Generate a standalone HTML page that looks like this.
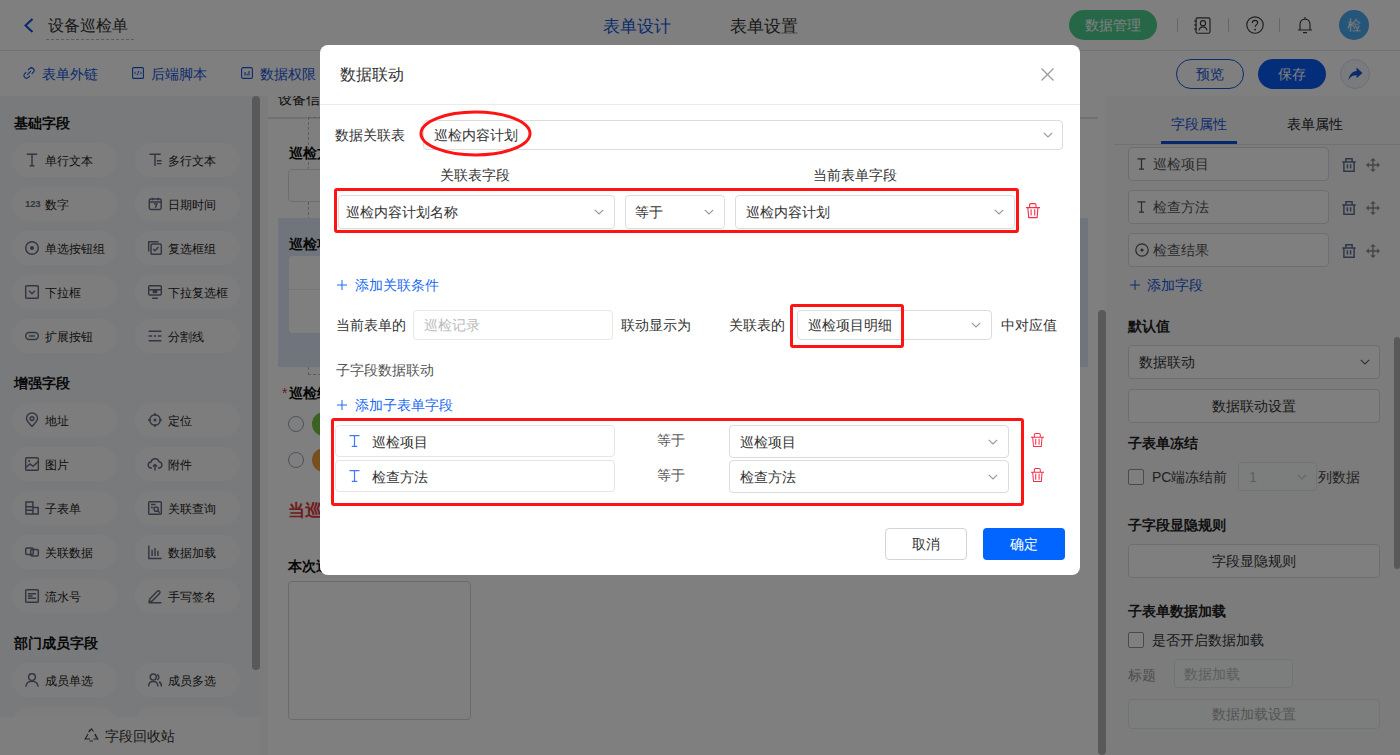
<!DOCTYPE html>
<html><head><meta charset="utf-8">
<style>
*{box-sizing:border-box}
html,body{margin:0;padding:0}
body{width:1400px;height:755px;overflow:hidden;position:relative;font-family:"Liberation Sans",sans-serif;color:#333;background:#fff}
.a{position:absolute}
.t{position:absolute;white-space:nowrap;line-height:1}
.f14{font-size:14px}.f12{font-size:12px}.f16{font-size:16px}
.b{font-weight:bold}
svg{position:absolute;overflow:visible}
/* sidebar pills */
.pill{position:absolute;width:105px;height:34px;border-radius:17px;background:#fbfbfc}
.pill .ic{position:absolute}
.pill .ic [stroke]{stroke-width:1.25}
.pill span{position:absolute;left:33px;top:12px;font-size:12px;line-height:12px;color:#222;white-space:nowrap}
.sel{position:absolute;border:1px solid #dcdfe6;border-radius:4px;background:#fff}
.chev{position:absolute;width:10px;height:6px}
</style></head><body>
<!-- ============ PAGE ============ -->
<div id="page">
 <!-- top bar -->
 <div class="a" style="left:0;top:0;width:1400px;height:51px;background:#fff;border-bottom:1px solid #e6e6e6"></div>
 <svg style="left:23px;top:18px" width="11" height="15" viewBox="0 0 11 15"><path d="M9.5 1 L2.5 7.5 L9.5 14" fill="none" stroke="#0a4fd8" stroke-width="2"/></svg>
 <div class="t f16" style="left:48px;top:18px;color:#333">设备巡检单</div>
 <div class="a" style="left:46px;top:39px;width:88px;border-top:1px dashed #bbb"></div>
 <div class="t" style="left:603px;top:17.5px;font-size:17px;color:#1656d9">表单设计</div>
 <div class="t" style="left:730px;top:17.5px;font-size:17px;color:#333">表单设置</div>
 <div class="a" style="left:1069px;top:10px;width:88px;height:30px;border-radius:15px;background:#4acf8e"></div>
 <div class="t f14" style="left:1085px;top:18px;color:#fff">数据管理</div>
 <div class="a" style="left:1177px;top:18px;width:1px;height:14px;background:#ccc"></div>
 <div class="a" style="left:1228px;top:18px;width:1px;height:14px;background:#ccc"></div>
 <div class="a" style="left:1279px;top:18px;width:1px;height:14px;background:#ccc"></div>
 <!-- contacts icon -->
 <svg style="left:1193px;top:17px" width="18" height="17" viewBox="0 0 18 17"><rect x="3" y="0.8" width="14" height="15.4" rx="1.5" fill="none" stroke="#3a3a3a" stroke-width="1.15"/><path d="M1 4h3M1 8h3M1 12h3" stroke="#3a3a3a" stroke-width="1.1"/><circle cx="10" cy="6.2" r="2.6" fill="none" stroke="#3a3a3a" stroke-width="1.1"/><path d="M6 13.5c0.5-2.5 2-3.6 4-3.6s3.5 1.1 4 3.6" fill="none" stroke="#3a3a3a" stroke-width="1.1"/></svg>
 <!-- help icon -->
 <svg style="left:1246px;top:16px" width="18" height="18" viewBox="0 0 18 18"><circle cx="9" cy="9" r="8.2" fill="none" stroke="#3a3a3a" stroke-width="1.15"/><path d="M6.3 7c0-1.7 1.2-2.7 2.7-2.7s2.7 1 2.7 2.5c0 1.8-2.5 2-2.5 4" fill="none" stroke="#3a3a3a" stroke-width="1.15"/><circle cx="9.1" cy="13.6" r="0.9" fill="#333"/></svg>
 <!-- bell icon -->
 <svg style="left:1297px;top:16px" width="16" height="18" viewBox="0 0 16 18"><path d="M8 1v1.5M3 14V8.5C3 5.5 5 3.2 8 3.2s5 2.3 5 5.3V14M1 14h14M6 16.6h4" fill="none" stroke="#3a3a3a" stroke-width="1.15"/></svg>
 <div class="a" style="left:1339px;top:10px;width:30px;height:30px;border-radius:15px;background:#4aaaf0"></div>
 <div class="t f14" style="left:1347px;top:18px;color:#f4f8fc">检</div>

 <!-- second bar -->
 <div class="a" style="left:0;top:51px;width:1400px;height:45px;background:#fff"></div>
 <svg style="left:23px;top:67px" width="12" height="12" viewBox="0 0 12 12"><path d="M5 3.2l1.6-1.6a2.6 2.6 0 0 1 3.7 3.7L8.7 6.9M7 8.8L5.4 10.4a2.6 2.6 0 0 1-3.7-3.7L3.3 5.1M4.2 7.8l3.6-3.6" fill="none" stroke="#1656d9" stroke-width="1.1"/></svg>
 <div class="t f14" style="left:42px;top:67px;color:#1656d9">表单外链</div>
 <svg style="left:132px;top:67px" width="12" height="12" viewBox="0 0 12 12"><rect x="0.6" y="0.6" width="10.8" height="10.8" rx="1" fill="none" stroke="#1656d9" stroke-width="1.1"/><path d="M4 4.5L2.5 6 4 7.5M8 4.5L9.5 6 8 7.5M6.6 3.8L5.4 8.2" fill="none" stroke="#1656d9" stroke-width="0.9"/></svg>
 <div class="t f14" style="left:151px;top:67px;color:#1656d9">后端脚本</div>
 <svg style="left:241px;top:67px" width="12" height="12" viewBox="0 0 12 12"><rect x="0.6" y="0.6" width="10.8" height="10.8" rx="1.5" fill="none" stroke="#1656d9" stroke-width="1.1"/><path d="M4 5v3.5M6 6.5v2M8 4v4.5" stroke="#1656d9" stroke-width="1.1"/></svg>
 <div class="t f14" style="left:260px;top:67px;color:#1656d9">数据权限</div>
 <div class="a" style="left:1176px;top:59px;width:68px;height:30px;border-radius:15px;border:1px solid #1656d9;background:#fff"></div>
 <div class="t f14" style="left:1196px;top:67px;color:#1656d9">预览</div>
 <div class="a" style="left:1258px;top:59px;width:68px;height:30px;border-radius:15px;background:#0a5cf5"></div>
 <div class="t f14" style="left:1278px;top:67px;color:#fff">保存</div>
 <div class="a" style="left:1340px;top:59px;width:30px;height:30px;border-radius:15px;border:1px solid #d5def0;background:#f3f6fb"></div>
 <svg style="left:1348px;top:67px" width="15" height="14" viewBox="0 0 14 13"><path d="M8 0.5L13.5 5.5 8 10.5V7.6C4.5 7.6 2.3 8.8 0.5 12 1 7.5 3.5 4.2 8 3.6Z" fill="#1656d9"/></svg>

 <!-- left sidebar -->
 <div class="a" style="left:0;top:96px;width:260px;height:659px;background:#f3f4f6"></div>
 <div class="t f14 b" style="left:14px;top:116px;color:#111">基础字段</div>
 <div class="t f14 b" style="left:14px;top:376px;color:#111">增强字段</div>
 <div class="t f14 b" style="left:14px;top:636px;color:#111">部门成员字段</div>
 <div id="pills"><div class="pill" style="left:12px;top:143px"><svg class="ic" style="left:13px;top:10px" width="14" height="14" viewBox="0 0 12 12"><path d="M1.5 1h9M6 1v10M4 11h4" stroke="#646d82" stroke-width="1.3" fill="none"/></svg><span>单行文本</span></div>
 <div class="pill" style="left:135px;top:143px"><svg class="ic" style="left:13px;top:10px" width="14" height="14" viewBox="0 0 12 12"><path d="M1.3 1.1h9.6M6 1.1v10M7.6 6.7h4M7.6 9.1h4" stroke="#646d82" stroke-width="1.2" fill="none"/></svg><span>多行文本</span></div>
 <div class="pill" style="left:12px;top:187px"><svg class="ic" style="left:13px;top:10px" width="14" height="14" viewBox="0 0 12 12"><text x="0" y="8.7" font-size="8.3" font-weight="bold" fill="#646d82" font-family="Liberation Sans" letter-spacing="-0.2">123</text></svg><span>数字</span></div>
 <div class="pill" style="left:135px;top:187px"><svg class="ic" style="left:13px;top:10px" width="14" height="14" viewBox="0 0 12 12"><rect x="1.1" y="1.8" width="10.2" height="8.9" rx="1.2" fill="none" stroke="#646d82" stroke-width="1.2"/><path d="M1.1 4.3h10.2M3.8 0.6v2.2M8.6 0.6v2.2M5 5.9h2.6l-1.3 3.3" stroke="#646d82" stroke-width="1" fill="none"/></svg><span>日期时间</span></div>
 <div class="pill" style="left:12px;top:231px"><svg class="ic" style="left:13px;top:10px" width="14" height="14" viewBox="0 0 12 12"><circle cx="6" cy="6" r="5.4" fill="none" stroke="#646d82" stroke-width="1.2"/><circle cx="6" cy="6" r="1.8" fill="#646d82"/></svg><span>单选按钮组</span></div>
 <div class="pill" style="left:135px;top:231px"><svg class="ic" style="left:13px;top:10px" width="14" height="14" viewBox="0 0 12 12"><path d="M0.6 9V0.6H9" stroke="#646d82" stroke-width="1.1" fill="none"/><rect x="2.6" y="2.6" width="8.8" height="8.8" rx="1" fill="none" stroke="#646d82" stroke-width="1.2"/><path d="M4.5 6.8l1.5 1.5 3-3.2" stroke="#646d82" stroke-width="1.1" fill="none"/></svg><span>复选框组</span></div>
 <div class="pill" style="left:12px;top:275px"><svg class="ic" style="left:13px;top:10px" width="14" height="14" viewBox="0 0 12 12"><rect x="0.6" y="0.6" width="10.8" height="10.8" rx="1" fill="none" stroke="#646d82" stroke-width="1.2"/><path d="M3.5 5l2.5 2.5 2.5-2.5" stroke="#646d82" stroke-width="1.2" fill="none"/></svg><span>下拉框</span></div>
 <div class="pill" style="left:135px;top:275px"><svg class="ic" style="left:13px;top:10px" width="14" height="14" viewBox="0 0 12 12"><rect x="0.6" y="0.6" width="10.8" height="8" rx="1" fill="none" stroke="#646d82" stroke-width="1.2"/><path d="M0.6 4h10.8M3.5 11.3h5" stroke="#646d82" stroke-width="1.2" fill="none"/><rect x="4" y="4" width="4" height="3" fill="#646d82"/></svg><span>下拉复选框</span></div>
 <div class="pill" style="left:12px;top:319px"><svg class="ic" style="left:13px;top:10px" width="14" height="14" viewBox="0 0 12 12"><rect x="0.6" y="3" width="10.8" height="6" rx="3" fill="none" stroke="#646d82" stroke-width="1.3"/><path d="M3.5 6h5" stroke="#646d82" stroke-width="1.2"/></svg><span>扩展按钮</span></div>
 <div class="pill" style="left:135px;top:319px"><svg class="ic" style="left:13px;top:10px" width="14" height="14" viewBox="0 0 12 12"><path d="M0.5 2h11M0.5 6h3M5 6h2M8.5 6h3M0.5 10h11" stroke="#646d82" stroke-width="1.1" fill="none"/></svg><span>分割线</span></div>
 <div class="pill" style="left:12px;top:403px"><svg class="ic" style="left:13px;top:10px" width="14" height="14" viewBox="0 0 12 12"><path d="M6 11.5C3 8.5 1.3 6.4 1.3 4.7a4.7 4.7 0 0 1 9.4 0c0 1.7-1.7 3.8-4.7 6.8z" fill="none" stroke="#646d82" stroke-width="1.2"/><circle cx="6" cy="4.8" r="1.6" fill="none" stroke="#646d82" stroke-width="1.1"/></svg><span>地址</span></div>
 <div class="pill" style="left:135px;top:403px"><svg class="ic" style="left:13px;top:10px" width="14" height="14" viewBox="0 0 12 12"><circle cx="6" cy="6" r="4.5" fill="none" stroke="#646d82" stroke-width="1.2"/><circle cx="6" cy="6" r="1.3" fill="#646d82"/><path d="M6 0v2.5M6 9.5V12M0 6h2.5M9.5 6H12" stroke="#646d82" stroke-width="1.2"/></svg><span>定位</span></div>
 <div class="pill" style="left:12px;top:447px"><svg class="ic" style="left:13px;top:10px" width="14" height="14" viewBox="0 0 12 12"><rect x="0.6" y="0.6" width="10.8" height="10.8" rx="1" fill="none" stroke="#646d82" stroke-width="1.2"/><path d="M0.8 9l3.5-3 2.5 2 4.5-4" stroke="#646d82" stroke-width="1.1" fill="none"/><circle cx="3.5" cy="3.5" r="0.9" fill="#646d82"/></svg><span>图片</span></div>
 <div class="pill" style="left:135px;top:447px"><svg class="ic" style="left:13px;top:10px" width="14" height="14" viewBox="0 0 12 12"><path d="M3.5 9.5H3a2.6 2.6 0 0 1-.4-5.2A3.6 3.6 0 0 1 9.5 4a2.8 2.8 0 0 1 .2 5.5H8.5M6 11.5V6.5M4.2 8.2L6 6.4l1.8 1.8" fill="none" stroke="#646d82" stroke-width="1.1"/></svg><span>附件</span></div>
 <div class="pill" style="left:12px;top:491px"><svg class="ic" style="left:13px;top:10px" width="14" height="14" viewBox="0 0 12 12"><path d="M0.8 0.8h6v10.4h-6zM0.8 5h6M6.8 5.5h4.5v5.7H6.8M0.8 8h6" fill="none" stroke="#646d82" stroke-width="1.1"/></svg><span>子表单</span></div>
 <div class="pill" style="left:135px;top:491px"><svg class="ic" style="left:13px;top:10px" width="14" height="14" viewBox="0 0 12 12"><rect x="0.6" y="0.6" width="10.8" height="10.8" rx="1" fill="none" stroke="#646d82" stroke-width="1.1"/><path d="M2.5 3h4M2.5 5.5h2" stroke="#646d82" stroke-width="1"/><circle cx="7" cy="7" r="1.8" fill="none" stroke="#646d82" stroke-width="1"/><path d="M8.3 8.3l1.8 1.8" stroke="#646d82" stroke-width="1.1"/></svg><span>关联查询</span></div>
 <div class="pill" style="left:12px;top:535px"><svg class="ic" style="left:13px;top:10px" width="14" height="14" viewBox="0 0 12 12"><rect x="0.6" y="2.6" width="6.5" height="5.5" rx="1" fill="none" stroke="#646d82" stroke-width="1.1"/><rect x="4.9" y="3.9" width="6.5" height="5.5" rx="1" fill="none" stroke="#646d82" stroke-width="1.1"/></svg><span>关联数据</span></div>
 <div class="pill" style="left:135px;top:535px"><svg class="ic" style="left:13px;top:10px" width="14" height="14" viewBox="0 0 12 12"><path d="M0.7 0.5v11h11M3.5 4v5.5M6 2.5v7M8.5 5v4.5" stroke="#646d82" stroke-width="1.2" fill="none"/></svg><span>数据加载</span></div>
 <div class="pill" style="left:12px;top:579px"><svg class="ic" style="left:13px;top:10px" width="14" height="14" viewBox="0 0 12 12"><rect x="0.6" y="0.6" width="10.8" height="10.8" rx="1" fill="none" stroke="#646d82" stroke-width="1.1"/><path d="M2.5 4h7M2.5 6h4M2.5 8h7" stroke="#646d82" stroke-width="1"/></svg><span>流水号</span></div>
 <div class="pill" style="left:135px;top:579px"><svg class="ic" style="left:13px;top:10px" width="14" height="14" viewBox="0 0 12 12"><path d="M1.5 8.5L8 2a1.3 1.3 0 0 1 1.9 1.9L3.5 10.3 1 11z M0.5 11.8h11" fill="none" stroke="#646d82" stroke-width="1.1"/></svg><span>手写签名</span></div>
 <div class="pill" style="left:12px;top:663px"><svg class="ic" style="left:13px;top:10px" width="14" height="14" viewBox="0 0 12 12"><circle cx="6" cy="3.5" r="2.9" fill="none" stroke="#646d82" stroke-width="1.2"/><path d="M0.8 11.8c0-3 2.3-4.8 5.2-4.8s5.2 1.8 5.2 4.8" fill="none" stroke="#646d82" stroke-width="1.2"/></svg><span>成员单选</span></div>
 <div class="pill" style="left:135px;top:663px"><svg class="ic" style="left:13px;top:10px" width="14" height="14" viewBox="0 0 12 12"><circle cx="4.5" cy="3.5" r="2.6" fill="none" stroke="#646d82" stroke-width="1.2"/><path d="M0.5 11.5c0-2.6 1.7-4.3 4-4.3s4 1.7 4 4.3M7.8 1.3a2.5 2.5 0 0 1 0 4.6M9.5 7.5c1.3.6 2 2 2 4" fill="none" stroke="#646d82" stroke-width="1.2"/></svg><span>成员多选</span></div>
 <div class="pill" style="left:12px;top:707px"><svg class="ic" style="left:13px;top:10px" width="14" height="14" viewBox="0 0 12 12"><circle cx="6" cy="3.5" r="2.9" fill="none" stroke="#646d82" stroke-width="1.2"/><path d="M0.8 11.8c0-3 2.3-4.8 5.2-4.8s5.2 1.8 5.2 4.8" fill="none" stroke="#646d82" stroke-width="1.2"/></svg><span>部门单选</span></div>
 <div class="pill" style="left:135px;top:707px"><svg class="ic" style="left:13px;top:10px" width="14" height="14" viewBox="0 0 12 12"><circle cx="4.5" cy="3.5" r="2.6" fill="none" stroke="#646d82" stroke-width="1.2"/><path d="M0.5 11.5c0-2.6 1.7-4.3 4-4.3s4 1.7 4 4.3M7.8 1.3a2.5 2.5 0 0 1 0 4.6M9.5 7.5c1.3.6 2 2 2 4" fill="none" stroke="#646d82" stroke-width="1.2"/></svg><span>部门多选</span></div></div><!--endpills-->
 <div class="a" style="left:0;top:717px;width:260px;height:38px;background:#fcfcfd"></div>
 <svg style="left:84px;top:728px" width="15" height="14" viewBox="0 0 15 14"><path d="M5.5 3.5L7.5 0.8 9.5 3.5M11 6l2.8 5H9.5M4 6L1.2 11H6M6.2 1.4L4.6 4.2M9 13h-3.5M12.2 9l-1.5-2.8" fill="none" stroke="#444" stroke-width="1.1"/></svg>
 <div class="t f14" style="left:105px;top:729px;color:#333">字段回收站</div>
 <div class="a" style="left:252px;top:96px;width:8px;height:574px;border-radius:4px;background:#b3b3b3"></div>

 <!-- middle canvas -->
 <div class="a" style="left:260px;top:96px;width:846px;height:659px;background:#f6f7f9"></div>
 <div class="a" style="left:268px;top:96px;width:838px;height:659px;background:#fff"></div>
 <div class="t f14" style="left:278px;top:92px;color:#222;clip-path:inset(4px 0 0 0)">设备信息</div>
 <div class="a" style="left:268px;top:117px;width:830px;height:2px;background:#e3e3e3"></div>
 <div class="a" style="left:308px;top:117px;width:770px;height:258px;border:1px dashed #bbb;border-right:none"></div>
 <div class="t f14 b" style="left:289px;top:146px;color:#111">巡检方式</div>
 <div class="a" style="left:288px;top:169px;width:500px;height:33px;border:1px solid #ddd;border-radius:4px;background:#fff"></div>
 <div class="a" style="left:278px;top:218px;width:810px;height:149px;background:#e1ebfa"></div>
 <div class="t f14 b" style="left:289px;top:237px;color:#111">巡检项目明细</div>
 <div class="a" style="left:289px;top:256px;width:780px;height:77px;background:#fff;border-radius:4px"></div>
 <div class="a" style="left:289px;top:289px;width:780px;height:1px;background:#eee"></div>
 <div class="t f14 b" style="left:289px;top:386px;color:#111">巡检结果</div>
 <div class="t f14" style="left:282px;top:386px;color:#d33">*</div>
 <div class="a" style="left:288px;top:416px;width:16px;height:16px;border-radius:8px;border:1px solid #9aa3b5"></div>
 <div class="a" style="left:288px;top:452px;width:16px;height:16px;border-radius:8px;border:1px solid #9aa3b5"></div>
 <div class="a" style="left:312px;top:412px;width:24px;height:24px;border-radius:12px;background:#76c442"></div>
 <div class="a" style="left:312px;top:448px;width:24px;height:24px;border-radius:12px;background:#f0a040"></div>
 <div class="t b" style="left:288px;top:502px;font-size:17px;color:#e03a3a">当巡检结果</div>
 <div class="t f14 b" style="left:288px;top:559px;color:#111">本次巡检</div>
 <div class="a" style="left:288px;top:581px;width:183px;height:139px;border:1px solid #d6d6d6;border-radius:4px"></div>
 <div class="a" style="left:1098px;top:310px;width:8px;height:445px;border-radius:4px;background:#b3b3b3"></div>

 <!-- right panel -->
 <div class="a" style="left:1106px;top:96px;width:294px;height:659px;background:#f8f9fb"></div>
 <div class="t f14" style="left:1171px;top:117px;color:#1656d9">字段属性</div>
 <div class="t f14" style="left:1287px;top:117px;color:#222">表单属性</div>
 <div class="a" style="left:1114px;top:144px;width:286px;height:1px;background:#e3e3e3"></div>
 <div class="a" style="left:1161px;top:141px;width:76px;height:3px;background:#0a4fd8"></div>
 <div id="rp"></div><div class="a" style="left:1128px;top:147px;width:201px;height:34px;border:1px solid #d9dce1;border-radius:4px;background:#fff"></div>
 <svg style="left:1137px;top:158px" width="9" height="12" viewBox="0 0 9 12"><path d="M0.5 0.8h8M4.5 0.8v10.4M2 11.2h5" fill="none" stroke="#555" stroke-width="1.2"/></svg>
 <div class="t f14" style="left:1153px;top:157px;color:#555">巡检项目</div>
 <svg style="left:1342px;top:158px" width="14" height="14" viewBox="0 0 14 14"><path d="M3.9 3.6V0.8h6.2v2.8M0.3 4h13.4M1.9 4v9.2h10.2V4M5.4 6.2v4.4M8.6 6.2v4.4" fill="none" stroke="#5f6f8f" stroke-width="1.5"/></svg>
 <svg style="left:1366px;top:158px" width="14" height="14" viewBox="0 0 14 14"><path d="M7 2v10M2 7h10" fill="none" stroke="#8a8a8e" stroke-width="1.4"/><path d="M7 0L9.8 2.8H4.2zM7 14L9.8 11.2H4.2zM0 7L2.8 4.2V9.8zM14 7L11.2 4.2V9.8z" fill="#8a8a8e"/></svg>
 <div class="a" style="left:1128px;top:190px;width:201px;height:34px;border:1px solid #d9dce1;border-radius:4px;background:#fff"></div>
 <svg style="left:1137px;top:201px" width="9" height="12" viewBox="0 0 9 12"><path d="M0.5 0.8h8M4.5 0.8v10.4M2 11.2h5" fill="none" stroke="#555" stroke-width="1.2"/></svg>
 <div class="t f14" style="left:1153px;top:200px;color:#555">检查方法</div>
 <svg style="left:1342px;top:201px" width="14" height="14" viewBox="0 0 14 14"><path d="M3.9 3.6V0.8h6.2v2.8M0.3 4h13.4M1.9 4v9.2h10.2V4M5.4 6.2v4.4M8.6 6.2v4.4" fill="none" stroke="#5f6f8f" stroke-width="1.5"/></svg>
 <svg style="left:1366px;top:201px" width="14" height="14" viewBox="0 0 14 14"><path d="M7 2v10M2 7h10" fill="none" stroke="#8a8a8e" stroke-width="1.4"/><path d="M7 0L9.8 2.8H4.2zM7 14L9.8 11.2H4.2zM0 7L2.8 4.2V9.8zM14 7L11.2 4.2V9.8z" fill="#8a8a8e"/></svg>
 <div class="a" style="left:1128px;top:233px;width:201px;height:34px;border:1px solid #d9dce1;border-radius:4px;background:#fff"></div>
 <svg style="left:1135px;top:243px" width="14" height="14" viewBox="0 0 14 14"><circle cx="7" cy="7" r="6.2" fill="none" stroke="#555" stroke-width="1.2"/><circle cx="7" cy="7" r="1.6" fill="#555"/></svg>
 <div class="t f14" style="left:1153px;top:243px;color:#555">检查结果</div>
 <svg style="left:1342px;top:244px" width="14" height="14" viewBox="0 0 14 14"><path d="M3.9 3.6V0.8h6.2v2.8M0.3 4h13.4M1.9 4v9.2h10.2V4M5.4 6.2v4.4M8.6 6.2v4.4" fill="none" stroke="#5f6f8f" stroke-width="1.5"/></svg>
 <svg style="left:1366px;top:244px" width="14" height="14" viewBox="0 0 14 14"><path d="M7 2v10M2 7h10" fill="none" stroke="#8a8a8e" stroke-width="1.4"/><path d="M7 0L9.8 2.8H4.2zM7 14L9.8 11.2H4.2zM0 7L2.8 4.2V9.8zM14 7L11.2 4.2V9.8z" fill="#8a8a8e"/></svg>
 <svg style="left:1130px;top:280px" width="10" height="10" viewBox="0 0 10 10"><path d="M5 0v10M0 5h10" stroke="#1656d9" stroke-width="1"/></svg>
 <div class="t f14" style="left:1147px;top:278px;color:#1656d9">添加字段</div>
 <div class="t f14 b" style="left:1128px;top:319px;color:#222">默认值</div>
 <div class="a" style="left:1128px;top:345px;width:252px;height:34px;border:1px solid #d9dce1;border-radius:4px;background:#fff"></div>
 <div class="t f14" style="left:1139px;top:355px;color:#333">数据联动</div>
 <svg style="left:1360px;top:359px" width="10" height="6" viewBox="0 0 10 6"><path d="M0.8 0.8L5 5 9.2 0.8" fill="none" stroke="#666" stroke-width="1.2"/></svg>
 <div class="a" style="left:1128px;top:389px;width:252px;height:34px;border:1px solid #d9dce1;border-radius:4px;background:#fff"></div>
 <div class="t f14" style="left:1212px;top:399px;color:#333">数据联动设置</div>
 <div class="t f14 b" style="left:1128px;top:436px;color:#222">子表单冻结</div>
 <div class="a" style="left:1128px;top:469px;width:16px;height:16px;border:1px solid #9097a5;border-radius:2px;background:#fff"></div>
 <div class="t f14" style="left:1152px;top:470px;color:#444">PC端冻结前</div>
 <div class="a" style="left:1238px;top:462px;width:79px;height:29px;border:1px solid #e5e7ea;border-radius:4px;background:#f9fafb"></div>
 <div class="t f14" style="left:1249px;top:470px;color:#bbb">1</div>
 <svg style="left:1297px;top:474px" width="10" height="6" viewBox="0 0 10 6"><path d="M0.8 0.8L5 5 9.2 0.8" fill="none" stroke="#ccc" stroke-width="1.2"/></svg>
 <div class="t f14" style="left:1318px;top:470px;color:#444">列数据</div>
 <div class="t f14 b" style="left:1128px;top:518px;color:#222">子字段显隐规则</div>
 <div class="a" style="left:1128px;top:544px;width:252px;height:34px;border:1px solid #d9dce1;border-radius:4px;background:#fff"></div>
 <div class="t f14" style="left:1212px;top:554px;color:#333">字段显隐规则</div>
 <div class="t f14 b" style="left:1128px;top:604px;color:#222">子表单数据加载</div>
 <div class="a" style="left:1128px;top:632px;width:16px;height:16px;border:1px solid #9097a5;border-radius:2px;background:#fff"></div>
 <div class="t f14" style="left:1152px;top:633px;color:#333">是否开启数据加载</div>
 <div class="t f14" style="left:1128px;top:668px;color:#999">标题</div>
 <div class="a" style="left:1174px;top:659px;width:119px;height:29px;border:1px solid #e5e7ea;border-radius:4px;background:#f9fafb"></div>
 <div class="t f14" style="left:1184px;top:667px;color:#bbb">数据加载</div>
 <div class="a" style="left:1128px;top:699px;width:252px;height:30px;border:1px solid #e5e7ea;border-radius:4px;background:#f9fafb"></div>
 <div class="t f14" style="left:1212px;top:707px;color:#aaa">数据加载设置</div><!--endrp-->
 <div class="a" style="left:1394px;top:337px;width:6px;height:232px;border-radius:3px;background:#b3b3b3"></div>
</div>
<!-- overlay -->
<div class="a" style="left:0;top:0;width:1400px;height:755px;background:rgba(0,0,0,0.5)"></div>

<!-- ============ MODAL ============ -->
<div class="a" style="left:320px;top:45px;width:760px;height:530px;background:#fff;border-radius:8px" id="modal">
</div>








<!--modal-->
<div class="t f16" style="left:340px;top:67px;color:#333">数据联动</div>
<svg style="left:1041px;top:68px" width="13" height="13" viewBox="0 0 13 13"><path d="M0.5 0.5l12 12M12.5 0.5l-12 12" stroke="#999" stroke-width="1.2"/></svg>
<div class="a" style="left:320px;top:104px;width:760px;height:1px;background:#ebebeb"></div>
<div class="t f14" style="left:335px;top:128px;color:#333;">数据关联表</div>
<div class="a" style="left:423px;top:120px;width:640px;height:30px;border:1px solid #dcdcdc;border-radius:4px;background:#fff"></div>
<div class="t f14" style="left:434px;top:128px;color:#333;">巡检内容计划</div>
<svg style="left:1043px;top:132px" width="10" height="6" viewBox="0 0 10 6"><path d="M0.8 0.8L5 5 9.2 0.8" fill="none" stroke="#999" stroke-width="1.2"/></svg>
<svg style="left:419px;top:110px" width="114" height="48" viewBox="0 0 114 48"><ellipse cx="56.5" cy="23.5" rx="54.5" ry="21.5" fill="none" stroke="#ff1414" stroke-width="3"/></svg>
<div class="t f14" style="left:440px;top:168px;color:#333;">关联表字段</div>
<div class="t f14" style="left:813px;top:168px;color:#333;">当前表单字段</div>
<div class="a" style="left:338px;top:195px;width:277px;height:34px;border:1px solid #dcdcdc;border-radius:4px;background:#fff"></div>
<div class="t f14" style="left:346px;top:205px;color:#333;">巡检内容计划名称</div>
<svg style="left:594px;top:209px" width="10" height="6" viewBox="0 0 10 6"><path d="M0.8 0.8L5 5 9.2 0.8" fill="none" stroke="#999" stroke-width="1.2"/></svg>
<div class="a" style="left:625px;top:195px;width:100px;height:34px;border:1px solid #dcdcdc;border-radius:4px;background:#fff"></div>
<div class="t f14" style="left:635px;top:205px;color:#333;">等于</div>
<svg style="left:704px;top:209px" width="10" height="6" viewBox="0 0 10 6"><path d="M0.8 0.8L5 5 9.2 0.8" fill="none" stroke="#999" stroke-width="1.2"/></svg>
<div class="a" style="left:735px;top:195px;width:280px;height:34px;border:1px solid #dcdcdc;border-radius:4px;background:#fff"></div>
<div class="t f14" style="left:746px;top:205px;color:#333;">巡检内容计划</div>
<svg style="left:994px;top:209px" width="10" height="6" viewBox="0 0 10 6"><path d="M0.8 0.8L5 5 9.2 0.8" fill="none" stroke="#999" stroke-width="1.2"/></svg>
<div class="a" style="left:334px;top:188px;width:685px;height:45px;border:3px solid #ff1414;border-radius:3px"></div>
<svg style="left:1026px;top:203px" width="14" height="15" viewBox="0 0 14 15"><path d="M3.6 4.2V1.9Q3.6 0.6 4.9 0.6H8.7Q10 0.6 10 1.9V4.2M0 4.6h14M1.8 4.6L2.7 14.6H11.1L11.9 4.6M5.1 6.2v6.4M8.7 6.2v6.4" fill="none" stroke="#f52f4a" stroke-width="1.1"/></svg>
<svg style="left:337px;top:280px" width="10" height="10" viewBox="0 0 10 10"><path d="M5 0v10M0 5h10" stroke="#1a6bf0" stroke-width="1"/></svg>
<div class="t f14" style="left:355px;top:278px;color:#1a6bf0;">添加关联条件</div>
<div class="t f14" style="left:336px;top:318px;color:#333;">当前表单的</div>
<div class="a" style="left:413px;top:310px;width:200px;height:30px;border:1px solid #e6e8eb;border-radius:4px;background:#fff"></div>
<div class="t f14" style="left:424px;top:318px;color:#bbb;">巡检记录</div>
<div class="t f14" style="left:621px;top:318px;color:#333;">联动显示为</div>
<div class="t f14" style="left:729px;top:318px;color:#333;">关联表的</div>
<div class="a" style="left:797px;top:310px;width:195px;height:30px;border:1px solid #dcdcdc;border-radius:4px;background:#fff"></div>
<div class="t f14" style="left:808px;top:318px;color:#333;">巡检项目明细</div>
<svg style="left:971px;top:322px" width="10" height="6" viewBox="0 0 10 6"><path d="M0.8 0.8L5 5 9.2 0.8" fill="none" stroke="#999" stroke-width="1.2"/></svg>
<div class="a" style="left:790px;top:304px;width:114px;height:44px;border:3px solid #ff1414;border-radius:3px"></div>
<div class="t f14" style="left:1001px;top:318px;color:#333;">中对应值</div>
<div class="t f14" style="left:336px;top:363px;color:#555;">子字段数据联动</div>
<svg style="left:337px;top:400px" width="10" height="10" viewBox="0 0 10 10"><path d="M5 0v10M0 5h10" stroke="#1a6bf0" stroke-width="1"/></svg>
<div class="t f14" style="left:355px;top:398px;color:#1a6bf0;">添加子表单字段</div>
<div class="a" style="left:335px;top:425px;width:280px;height:32px;border:1px solid #e3e5e8;border-radius:4px;background:#fff"></div>
<svg style="left:349px;top:435px" width="11" height="12" viewBox="0 0 11 12"><path d="M0.5 0.6h10M5.5 0.6v10.8M2.8 11.4h5.5" fill="none" stroke="#3d78ff" stroke-width="1.2"/></svg>
<div class="t f14" style="left:372px;top:435px;color:#333;">巡检项目</div>
<div class="t f14" style="left:657px;top:433px;color:#555;">等于</div>
<div class="a" style="left:729px;top:425px;width:280px;height:33px;border:1px solid #dcdcdc;border-radius:4px;background:#fff"></div>
<div class="t f14" style="left:740px;top:435px;color:#333;">巡检项目</div>
<svg style="left:988px;top:439px" width="10" height="6" viewBox="0 0 10 6"><path d="M0.8 0.8L5 5 9.2 0.8" fill="none" stroke="#999" stroke-width="1.2"/></svg>
<svg style="left:1031px;top:433px" width="13" height="14" viewBox="0 0 14 15"><path d="M3.6 4.2V1.9Q3.6 0.6 4.9 0.6H8.7Q10 0.6 10 1.9V4.2M0 4.6h14M1.8 4.6L2.7 14.6H11.1L11.9 4.6M5.1 6.2v6.4M8.7 6.2v6.4" fill="none" stroke="#f52f4a" stroke-width="1.1"/></svg>
<div class="a" style="left:335px;top:460px;width:280px;height:32px;border:1px solid #e3e5e8;border-radius:4px;background:#fff"></div>
<svg style="left:349px;top:470px" width="11" height="12" viewBox="0 0 11 12"><path d="M0.5 0.6h10M5.5 0.6v10.8M2.8 11.4h5.5" fill="none" stroke="#3d78ff" stroke-width="1.2"/></svg>
<div class="t f14" style="left:372px;top:470px;color:#333;">检查方法</div>
<div class="t f14" style="left:657px;top:468px;color:#555;">等于</div>
<div class="a" style="left:729px;top:460px;width:280px;height:33px;border:1px solid #dcdcdc;border-radius:4px;background:#fff"></div>
<div class="t f14" style="left:740px;top:470px;color:#333;">检查方法</div>
<svg style="left:988px;top:474px" width="10" height="6" viewBox="0 0 10 6"><path d="M0.8 0.8L5 5 9.2 0.8" fill="none" stroke="#999" stroke-width="1.2"/></svg>
<svg style="left:1031px;top:468px" width="13" height="14" viewBox="0 0 14 15"><path d="M3.6 4.2V1.9Q3.6 0.6 4.9 0.6H8.7Q10 0.6 10 1.9V4.2M0 4.6h14M1.8 4.6L2.7 14.6H11.1L11.9 4.6M5.1 6.2v6.4M8.7 6.2v6.4" fill="none" stroke="#f52f4a" stroke-width="1.1"/></svg>
<div class="a" style="left:331px;top:418px;width:693px;height:88px;border:3px solid #ff1414;border-radius:3px"></div>
<div class="a" style="left:885px;top:528px;width:82px;height:32px;border:1px solid #d0d3d8;border-radius:4px;background:#fff"></div>
<div class="t f14" style="left:912px;top:537px;color:#333;">取消</div>
<div class="a" style="left:983px;top:528px;width:82px;height:32px;border-radius:4px;background:#0265ff"></div>
<div class="t f14" style="left:1010px;top:537px;color:#fff;">确定</div>
<!--endmodal-->
</body></html>
